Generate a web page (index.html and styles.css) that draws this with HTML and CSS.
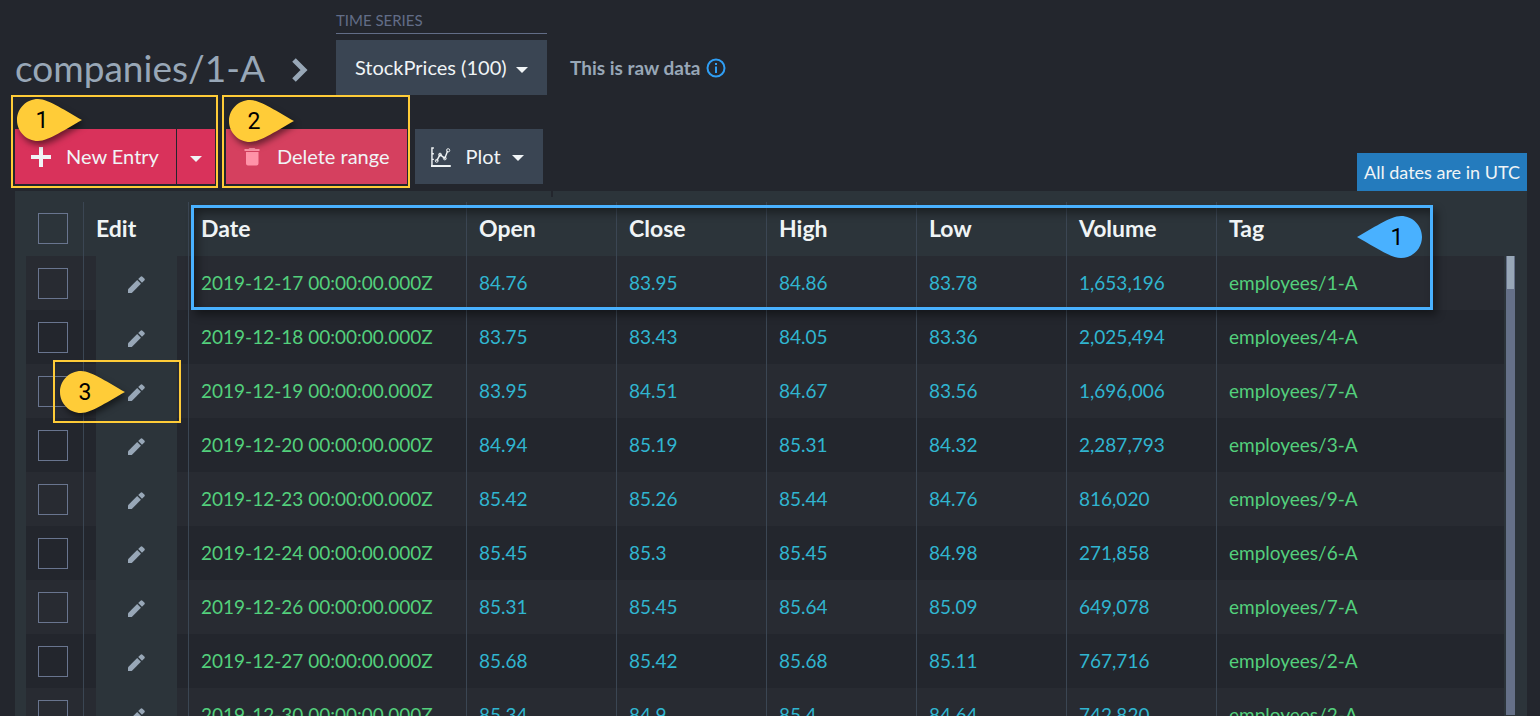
FILE: index.html
```html
<!DOCTYPE html>
<html lang="en">
<head>
    <meta charset="UTF-8">
    <meta name="viewport" content="width=device-width, initial-scale=1.0">
    <title>companies/1-A - Time Series</title>
    <link rel="stylesheet" href="styles.css">
</head>
<body>

    <svg width="0" height="0" class="sprite">
        <symbol id="icon-edit" viewBox="0 0 18 18">
            <path d="M0 18V14L9.700 4.300L13.700 8.300L4 18Z"/>
            <path d="M10.800 3.200L13.300 .7Q14.300 -.3 15.300 .7L17.300 2.700Q18.300 3.700 17.300 4.700L14.800 7.200Z"/>
        </symbol>
        <symbol id="pin-shape" viewBox="0 0 65 42">
            <path d="M21 0C9.400 0 0 9.400 0 21S9.400 42 21 42C32 42 50 29 65 21C50 13 32 0 21 0Z"/>
        </symbol>
    </svg>

    <header class="header">
        <h1 class="title">companies/1-A</h1>
        <svg class="chevron" viewBox="0 0 16 24"><path d="M2 2L12 12L2 22" fill="none" stroke="currentColor" stroke-width="5"/></svg>
        <div class="series">
            <label class="series-label" for="series">TIME SERIES</label>
            <div class="series-box">
                <select id="series" class="series-select">
                    <option>StockPrices (100)</option>
                </select>
                <span class="caret"></span>
            </div>
        </div>
        <div class="raw-info">
            This is raw data
            <svg class="info-icon" viewBox="0 0 20 20">
                <circle cx="10" cy="10" r="8.500" fill="none" stroke="currentColor" stroke-width="2"/>
                <path d="M9 5h2v2H9zM9 8.500h2V15H9z" fill="currentColor"/>
            </svg>
        </div>
    </header>

    <div class="toolbar">
        <div class="group split">
            <button class="btn btn-primary">
                <svg class="icon" viewBox="0 0 20 20"><path d="M8 0h4v8h8v4h-8v8H8v-8H0V8h8z" fill="currentColor"/></svg>
                New Entry
            </button>
            <button class="btn btn-primary btn-toggle" aria-label="More entry options"><span class="caret"></span></button>
            <div class="mark"></div>
            <div class="pin pin-new"><svg><use href="#pin-shape"/></svg><span>1</span></div>
        </div>
        <div class="group">
            <button class="btn btn-delete">
                <svg class="icon" viewBox="0 0 20 20"><path d="M2.500 2h4l1-1h5l1 1h4v2h-15zM4 5h12.500v11.500q0 2-2 2H6q-2 0-2-2z" fill="#ff93a8"/></svg>
                Delete range
            </button>
            <div class="mark"></div>
            <div class="pin pin-delete"><svg><use href="#pin-shape"/></svg><span>2</span></div>
        </div>
        <button class="btn btn-plot">
            <svg class="icon plot-icon" viewBox="0 0 21 21" fill="none" stroke="currentColor">
                <path d="M3 1H1V20H21M1 7h2M1 13h2" stroke-width="1.500"/>
                <path d="M0 20H20" stroke-width="2"/>
                <path d="M6 14.500L9.500 8L14.500 12L17.500 4" stroke-width="1.500"/>
                <circle cx="6" cy="14.500" r="1.500"/>
                <circle cx="9.500" cy="8" r="1.500"/>
                <circle cx="14.500" cy="12" r="1.500"/>
                <circle cx="18" cy="3.500" r="1.700"/>
            </svg>
            Plot
            <span class="caret"></span>
        </button>
        <div class="utc">All dates are in UTC</div>
    </div>

    <main class="panel">
        <table class="grid">
            <colgroup>
                <col class="col-check">
                <col class="col-edit">
                <col class="col-date">
                <col class="col-num" span="5">
                <col>
            </colgroup>
            <thead>
                <tr>
                    <th><input type="checkbox" aria-label="Select all"></th>
                    <th>Edit</th>
                    <th>Date</th>
                    <th>Open</th>
                    <th>Close</th>
                    <th>High</th>
                    <th>Low</th>
                    <th>Volume</th>
                    <th>Tag</th>
                </tr>
            </thead>
            <tbody id="rows"></tbody>
        </table>
        <div class="scrollbar"><div class="thumb"></div></div>

        <div class="mark mark-row"></div>
        <div class="pin pin-row"><svg><use href="#pin-shape"/></svg><span>1</span></div>
        <div class="mark mark-edit"></div>
        <div class="pin pin-edit"><svg><use href="#pin-shape"/></svg><span>3</span></div>
    </main>

    <script src="script.js"></script>

</body>
</html>
```

FILE: styles.css
```css
* {
    box-sizing: border-box;
}

body {
    font-family: Lato, sans-serif;
    font-size: 20px;
    margin: 0;
    padding: 0 13px 0 15px;
    background-color: #23262d;
    color: #f0f4f6;
    display: flex;
    flex-direction: column;
    height: 100vh;
    overflow: hidden;
}

.sprite {
    position: absolute;
}

/* header */
.header {
    display: flex;
    align-items: flex-end;
    height: 95px;
    color: #98a7b7;
}

.title {
    font-size: 37px;
    font-weight: 400;
    line-height: 55px;
    margin: 0;
}

.chevron {
    width: 16px;
    height: 24px;
    margin: 0 28px 13px 27px;
}

.series-label {
    display: block;
    font-size: 15px;
    line-height: 26px;
    color: #626d87;
    border-bottom: 1px solid #626d87;
    margin-bottom: 6px;
}

.series-box {
    position: relative;
}

.series-select {
    appearance: none;
    font: inherit;
    color: #f0f4f6;
    background-color: #3a4553;
    border: none;
    border-radius: 0;
    height: 55px;
    padding: 0 40px 2px 19px;
    display: block;
}

.series-box .caret {
    position: absolute;
    right: 19px;
    top: 27px;
    pointer-events: none;
}

.caret {
    border: 6px solid transparent;
    border-top-color: #f0f4f6;
    border-bottom: none;
}

.raw-info {
    display: flex;
    align-items: center;
    gap: 6px;
    height: 55px;
    margin-left: 23px;
    font-size: 19px;
    font-weight: 700;
}

.info-icon {
    width: 20px;
    height: 20px;
    color: #2f9ef4;
}

/* toolbar */
.toolbar {
    display: flex;
    align-items: flex-start;
    gap: 8px;
    margin-top: 34px;
    height: 62px;
    flex: none;
}

.group {
    position: relative;
    display: flex;
    gap: 1px;
}

.split {
    margin-right: 3px;
}

.btn {
    display: flex;
    align-items: center;
    gap: 15px;
    height: 55px;
    padding: 0 17px 2px 16px;
    border: none;
    font: inherit;
    color: #f0f4f6;
    cursor: pointer;
}

.icon {
    width: 20px;
    height: 20px;
    margin-top: 2px;
}

.btn-primary { background-color: #d9325b; }
.btn-delete { background-color: #d5405f; }

.btn-plot {
    padding-right: 19px;
    background-color: #3a4553;
}

.btn-toggle {
    padding: 0 13px;
}

.btn .caret {
    margin-top: 4px;
}

.btn-plot .caret {
    margin-left: -4px;
}

.utc {
    margin-left: auto;
    align-self: flex-end;
    padding: 0 7px;
    font-size: 18px;
    line-height: 38px;
    background-color: #247bbd;
}

/* table */
.panel {
    position: relative;
    flex: 1;
    min-height: 0;
    display: flex;
    gap: 2px;
    padding: 11px 12px 0 11px;
    background-color: #2c343a;
}

.panel::before {
    content: "";
    position: absolute;
    left: 536px;
    top: 0;
    width: 2px;
    height: 6px;
    background-color: #23262d;
}

.grid {
    flex: 1;
    table-layout: fixed;
    border-spacing: 0;
    align-self: flex-start;
}

.col-check { width: 58px; }
.col-edit { width: 105px; }
.col-date { width: 278px; }
.col-num { width: 150px; }

th, td {
    height: 54px;
    padding: 0 11px 0 12px;
    text-align: left;
    border-right: 1px solid #3b4653;
}

th:last-child, td:last-child {
    border-right: none;
}

th {
    font-size: 23px;
    padding-bottom: 2px;
}

td {
    font-size: 19px;
}

tbody tr { background-color: #23262d; }
tbody tr:nth-child(odd) { background-color: #282b32; }

.text, .number { padding-bottom: 2px; }
.text { color: #53d07c; }
.number { color: #30b5d0; }

input[type="checkbox"] {
    appearance: none;
    display: block;
    width: 30px;
    height: 31px;
    margin: 0;
    border: 1px solid #69758f;
}

.edit-btn {
    display: flex;
    align-items: center;
    justify-content: center;
    width: 81px;
    height: 54px;
    padding: 2px 0 0;
    border: none;
    background-color: #2c343a;
    color: #98a7b7;
    cursor: pointer;
}

.edit-btn svg {
    width: 17px;
    height: 17px;
    fill: currentColor;
}

.scrollbar {
    width: 9px;
    margin: 54px 0 1px;
    background-color: #657088;
}

.thumb {
    height: 33px;
    margin: 0 1px;
    background-color: #98a7b7;
}

/* callouts */
.mark {
    position: absolute;
    top: -34px;
    right: -3px;
    bottom: -4px;
    left: -4px;
    border: 2px solid #ffcc38;
    pointer-events: none;
}

.mark-row {
    top: 14px;
    right: 94px;
    bottom: auto;
    left: 176px;
    height: 105px;
    border: 3px solid #49b1ff;
    box-shadow: 4px 5px 8px rgba(0, 0, 0, 0.4), inset 4px 5px 8px rgba(0, 0, 0, 0.4);
}

.mark-edit {
    top: 169px;
    right: auto;
    bottom: auto;
    left: 38px;
    width: 128px;
    height: 63px;
}

.pin {
    position: absolute;
    width: 65px;
    height: 42px;
    font-family: Roboto, sans-serif;
    font-size: 23px;
    line-height: 42px;
    color: #000;
    pointer-events: none;
}

.pin svg {
    position: absolute;
    width: 65px;
    height: 42px;
    overflow: visible;
    fill: #ffcc38;
    filter: drop-shadow(2px 4px 3px rgba(0, 0, 0, 0.5));
}

.pin span {
    position: relative;
    display: block;
    width: 50px;
    padding-top: 1px;
    text-align: center;
}

.pin-new { left: 2px; top: -30px; }
.pin-delete { left: 3px; top: -29px; }
.pin-edit { left: 45px; top: 180px; }

.pin-row {
    right: 105px;
    top: 25px;
}

.pin-row svg {
    fill: #49b1ff;
    filter: none;
    transform: scaleX(-1);
}

.pin-row span {
    margin-left: 15px;
}
```

FILE: script.js
```js
const entries = [
    ['2019-12-17', '84.76', '83.95', '84.86', '83.78', '1,653,196', 'employees/1-A'],
    ['2019-12-18', '83.75', '83.43', '84.05', '83.36', '2,025,494', 'employees/4-A'],
    ['2019-12-19', '83.95', '84.51', '84.67', '83.56', '1,696,006', 'employees/7-A'],
    ['2019-12-20', '84.94', '85.19', '85.31', '84.32', '2,287,793', 'employees/3-A'],
    ['2019-12-23', '85.42', '85.26', '85.44', '84.76', '816,020', 'employees/9-A'],
    ['2019-12-24', '85.45', '85.3', '85.45', '84.98', '271,858', 'employees/6-A'],
    ['2019-12-26', '85.31', '85.45', '85.64', '85.09', '649,078', 'employees/7-A'],
    ['2019-12-27', '85.68', '85.42', '85.68', '85.11', '767,716', 'employees/2-A'],
    ['2019-12-30', '85.34', '84.9', '85.4', '84.64', '742,820', 'employees/2-A']
];

document.getElementById('rows').innerHTML = entries.map(([date, ...rest]) => {
    const tag = rest.pop();
    return `<tr>
        <td><input type="checkbox" aria-label="Select ${date}"></td>
        <td><button class="edit-btn" aria-label="Edit ${date}"><svg><use href="#icon-edit"/></svg></button></td>
        <td class="text">${date} 00:00:00.000Z</td>
        ${rest.map(value => `<td class="number">${value}</td>`).join('')}
        <td class="text">${tag}</td>
    </tr>`;
}).join('');
```
